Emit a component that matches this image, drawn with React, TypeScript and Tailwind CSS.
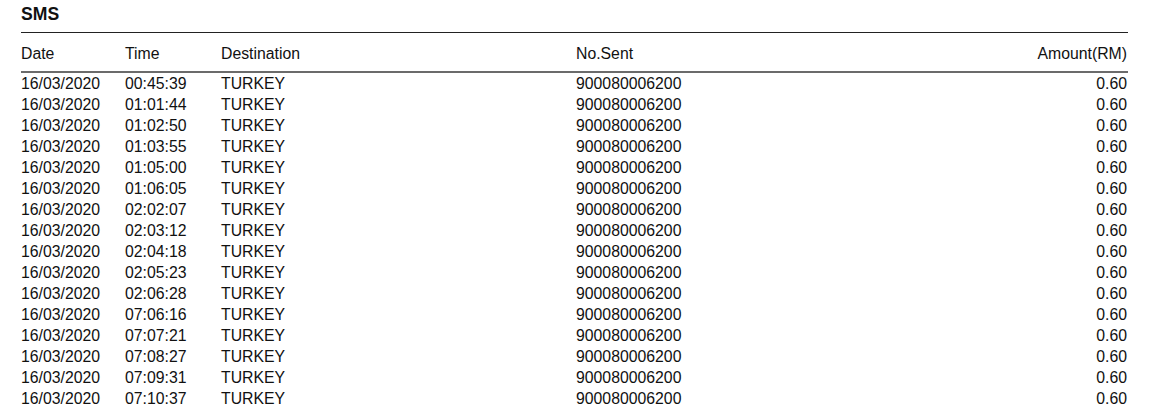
import React from 'react';

const times = [
  '00:45:39', '01:01:44', '01:02:50', '01:03:55', '01:05:00', '01:06:05',
  '02:02:07', '02:03:12', '02:04:18', '02:05:23', '02:06:28', '07:06:16',
  '07:07:21', '07:08:27', '07:09:31', '07:10:37',
];

const rows = times.map((time) => ({
  date: '16/03/2020',
  time,
  destination: 'TURKEY',
  sent: '900080006200',
  amount: '0.60',
}));

const cols = 'grid grid-cols-[104px_96px_355px_1fr_auto]';

const App: React.FC = () => {
  return (
    <div className="min-h-screen bg-white text-[#111] font-['Liberation_Sans',Arial,sans-serif]">
      <div className="pl-[21px] w-[1128px]">
        <h1 className="pt-[4px] h-[32px] text-[17.6px] leading-[20px] font-bold">SMS</h1>

        {/* header */}
        <div className={`${cols} border-t-[1.5px] border-b-2 border-t-[#222] border-b-[#6b6b6b] h-[41px] items-center text-[15.8px] pt-[3px]`}>
          <span>Date</span>
          <span>Time</span>
          <span>Destination</span>
          <span>No.Sent</span>
          <span className="text-right pr-px">Amount(RM)</span>
        </div>

        {/* rows */}
        <div className="text-[15.8px] leading-[21px]">
          {rows.map((r, i) => (
            <div key={i} className={`${cols} h-[21px]`}>
              <span>{r.date}</span>
              <span>{r.time}</span>
              <span>{r.destination}</span>
              <span>{r.sent}</span>
              <span className="text-right pr-px">{r.amount}</span>
            </div>
          ))}
        </div>
      </div>
    </div>
  );
};

export default App;
